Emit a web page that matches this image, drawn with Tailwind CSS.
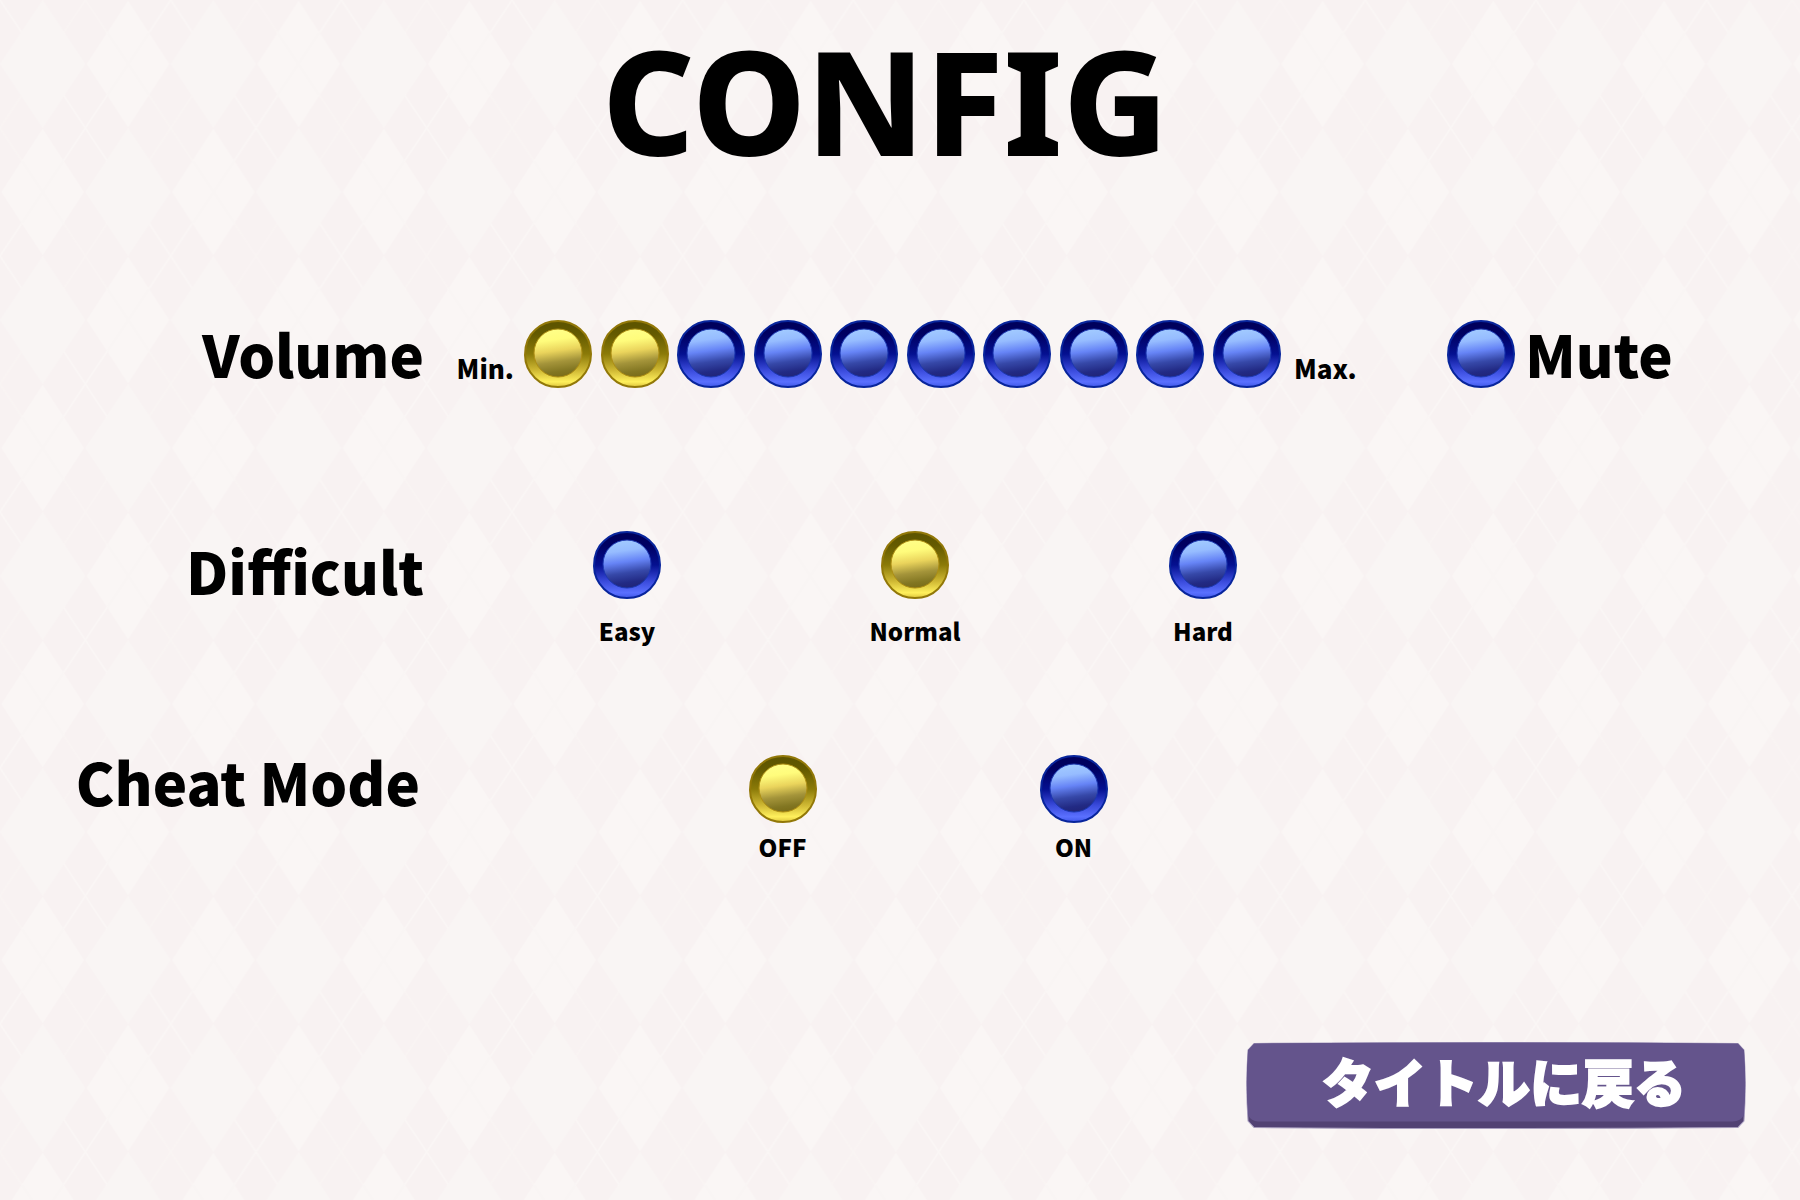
<!DOCTYPE html>
<html lang="ja">
<head>
<meta charset="utf-8">
<meta name="viewport" content="width=device-width, initial-scale=1">
<title>Config</title>
<script src="https://cdn.jsdelivr.net/npm/@tailwindcss/browser@4"></script>
</head>
<body class="relative isolate min-h-screen overflow-x-hidden bg-[#f8f2f2] font-['Noto_Sans_CJK_JP',sans-serif] font-black text-black">

<!-- Argyle backdrop -->
<svg class="absolute inset-0 -z-10 h-full w-full" aria-hidden="true">
  <defs>
    <pattern id="argyle" width="512" height="768" patternUnits="userSpaceOnUse" patternTransform="scale(.33333)">
      <path stroke="#faf6f5" stroke-width="5" fill="none" d="M0 0L512 768M512 0L0 768"/>
      <path stroke="#f9f4f3" stroke-width="5" fill="none" d="M256 0L512 384M256 0L0 384M0 384L256 768M512 384L256 768"/>
      <path fill="#f9f5f4" d="M128 0L256 192 128 384 0 192ZM384 384L512 576 384 768 256 576Z"/>
      <path fill="#faf6f5" d="M384 2L508 192 384 382 260 192ZM128 386L252 576 128 766 4 576Z"/>
      <path stroke="#f9f5f4" stroke-width="5" fill="none" d="M320 96L448 288M448 96L320 288M64 480L192 672M192 480L64 672"/>
    </pattern>
    <linearGradient id="blueRim" x1="0" y1="0" x2="0" y2="1">
      <stop offset=".06" stop-color="#00005c"/><stop offset=".2" stop-color="#000062"/><stop offset=".5" stop-color="#041090"/><stop offset=".75" stop-color="#3a4bdc"/><stop offset=".92" stop-color="#5a70ff"/><stop offset="1" stop-color="#4058e8"/>
    </linearGradient>
    <linearGradient id="blueFace" x1=".42" y1="0" x2=".56" y2="1">
      <stop offset="0" stop-color="#a2cbff"/><stop offset=".22" stop-color="#96bcff"/><stop offset=".45" stop-color="#6684f6"/><stop offset=".68" stop-color="#3648a8"/><stop offset=".88" stop-color="#222a84"/><stop offset="1" stop-color="#202478"/>
    </linearGradient>
    <linearGradient id="goldRim" x1="0" y1="0" x2="0" y2="1">
      <stop offset=".06" stop-color="#5e5500"/><stop offset=".2" stop-color="#645a00"/><stop offset=".5" stop-color="#8b7a08"/><stop offset=".75" stop-color="#d0b934"/><stop offset=".92" stop-color="#fff05c"/><stop offset="1" stop-color="#dcc43c"/>
    </linearGradient>
    <linearGradient id="goldFace" x1=".42" y1="0" x2=".56" y2="1">
      <stop offset="0" stop-color="#ffff88"/><stop offset=".22" stop-color="#fffc7c"/><stop offset=".45" stop-color="#ead45c"/><stop offset=".68" stop-color="#a4943a"/><stop offset=".88" stop-color="#827622"/><stop offset="1" stop-color="#7a6c18"/>
    </linearGradient>
    <symbol id="blue" viewBox="0 0 68 68">
      <path fill="url(#blueRim)" stroke="#08259c" stroke-width="2" d="M34 1C42 1 50 4 56 9C63 15 67 24 67 34C67 43 63 52 57 58C51 64 43 67 34 67C25 67 17 64 11 58C5 52 1 43 1 35C1 25 4 16 11 10C17 4 25 1 34 1Z"/>
      <circle cx="34" cy="33" r="24" fill="url(#blueFace)" stroke="#1c38b0"/>
    </symbol>
    <symbol id="gold" viewBox="0 0 68 68">
      <path fill="url(#goldRim)" stroke="#927808" stroke-width="2" d="M34 1C42 1 50 4 56 9C63 15 67 24 67 34C67 43 63 52 57 58C51 64 43 67 34 67C25 67 17 64 11 58C5 52 1 43 1 35C1 25 4 16 11 10C17 4 25 1 34 1Z"/>
      <circle cx="34" cy="33" r="24" fill="url(#goldFace)" stroke="#ae8e14"/>
    </symbol>
  </defs>
  <rect width="100%" height="100%" fill="url(#argyle)"/>
</svg>

<header class="pr-[30px]">
  <h1 class="text-center font-['Noto_Sans',sans-serif] text-[144px] leading-[200px] font-extrabold">CONFIG</h1>
</header>

<main class="pt-[120px]">
  <fieldset class="flex h-[211px] items-start text-[26px] leading-[36px]">
    <div class="w-[424px] shrink-0 text-right text-[58px] leading-[66px]" id="volume">Volume</div>
    <span class="w-[100px] shrink-0 pt-[30px] pr-[10px] text-right">Min.</span>
    <div class="flex w-[757px] justify-between" role="radiogroup" aria-labelledby="volume">
      <label class="relative size-[68px]"><input type="radio" name="volume" value="1" aria-label="Volume 1" class="absolute inset-0 size-full cursor-pointer appearance-none rounded-full"><svg class="size-full"><use href="#gold"/></svg></label>
      <label class="relative size-[68px]"><input type="radio" name="volume" value="2" aria-label="Volume 2" checked class="absolute inset-0 size-full cursor-pointer appearance-none rounded-full"><svg class="size-full"><use href="#gold"/></svg></label>
      <label class="relative size-[68px]"><input type="radio" name="volume" value="3" aria-label="Volume 3" class="absolute inset-0 size-full cursor-pointer appearance-none rounded-full"><svg class="size-full"><use href="#blue"/></svg></label>
      <label class="relative size-[68px]"><input type="radio" name="volume" value="4" aria-label="Volume 4" class="absolute inset-0 size-full cursor-pointer appearance-none rounded-full"><svg class="size-full"><use href="#blue"/></svg></label>
      <label class="relative size-[68px]"><input type="radio" name="volume" value="5" aria-label="Volume 5" class="absolute inset-0 size-full cursor-pointer appearance-none rounded-full"><svg class="size-full"><use href="#blue"/></svg></label>
      <label class="relative size-[68px]"><input type="radio" name="volume" value="6" aria-label="Volume 6" class="absolute inset-0 size-full cursor-pointer appearance-none rounded-full"><svg class="size-full"><use href="#blue"/></svg></label>
      <label class="relative size-[68px]"><input type="radio" name="volume" value="7" aria-label="Volume 7" class="absolute inset-0 size-full cursor-pointer appearance-none rounded-full"><svg class="size-full"><use href="#blue"/></svg></label>
      <label class="relative size-[68px]"><input type="radio" name="volume" value="8" aria-label="Volume 8" class="absolute inset-0 size-full cursor-pointer appearance-none rounded-full"><svg class="size-full"><use href="#blue"/></svg></label>
      <label class="relative size-[68px]"><input type="radio" name="volume" value="9" aria-label="Volume 9" class="absolute inset-0 size-full cursor-pointer appearance-none rounded-full"><svg class="size-full"><use href="#blue"/></svg></label>
      <label class="relative size-[68px]"><input type="radio" name="volume" value="10" aria-label="Volume 10" class="absolute inset-0 size-full cursor-pointer appearance-none rounded-full"><svg class="size-full"><use href="#blue"/></svg></label>
    </div>
    <span class="w-[166px] shrink-0 pt-[30px] pl-[13px]">Max.</span>
    <label class="flex cursor-pointer gap-[10px] text-[58px] leading-[66px]">
      <span class="relative size-[68px]"><input type="checkbox" name="mute" class="absolute inset-0 size-full cursor-pointer appearance-none rounded-full"><svg class="size-full"><use href="#blue"/></svg></span>
      Mute
    </label>
  </fieldset>

  <fieldset class="flex h-[217px] items-start text-[24px] leading-[36px]">
    <div class="w-[424px] shrink-0 pt-[6px] text-right text-[58px] leading-[66px]" id="difficulty">Difficult</div>
    <div class="ml-[59px] grid w-[864px] grid-cols-3" role="radiogroup" aria-labelledby="difficulty">
      <label class="flex cursor-pointer flex-col items-center gap-[14px]"><span class="relative size-[68px]"><input type="radio" name="difficulty" value="easy" class="absolute inset-0 size-full cursor-pointer appearance-none rounded-full"><svg class="size-full"><use href="#blue"/></svg></span>Easy</label>
      <label class="flex cursor-pointer flex-col items-center gap-[14px]"><span class="relative size-[68px]"><input type="radio" name="difficulty" value="normal" checked class="absolute inset-0 size-full cursor-pointer appearance-none rounded-full"><svg class="size-full"><use href="#gold"/></svg></span>Normal</label>
      <label class="flex cursor-pointer flex-col items-center gap-[14px]"><span class="relative size-[68px]"><input type="radio" name="difficulty" value="hard" class="absolute inset-0 size-full cursor-pointer appearance-none rounded-full"><svg class="size-full"><use href="#blue"/></svg></span>Hard</label>
    </div>
  </fieldset>

  <fieldset class="flex h-[294px] items-start text-[24px] leading-[36px]">
    <div class="w-[420px] shrink-0 text-right text-[58px] leading-[66px]" id="cheat">Cheat Mode</div>
    <div class="ml-[217px] grid w-[582px] grid-cols-2 pt-[7px]" role="radiogroup" aria-labelledby="cheat">
      <label class="flex cursor-pointer flex-col items-center gap-[6px]"><span class="relative size-[68px]"><input type="radio" name="cheat" value="off" checked class="absolute inset-0 size-full cursor-pointer appearance-none rounded-full"><svg class="size-full"><use href="#gold"/></svg></span>OFF</label>
      <label class="flex cursor-pointer flex-col items-center gap-[6px]"><span class="relative size-[68px]"><input type="radio" name="cheat" value="on" class="absolute inset-0 size-full cursor-pointer appearance-none rounded-full"><svg class="size-full"><use href="#blue"/></svg></span>ON</label>
    </div>
  </fieldset>
</main>

<footer class="flex justify-end pr-[54px]">
  <button type="button" class="relative isolate h-[87px] w-[500px] cursor-pointer pb-[10px] pl-4 text-[52px] leading-[76px] text-white [-webkit-text-stroke:2px_white]">
    <svg class="absolute inset-0 -z-10 size-full" viewBox="0 0 493 87" preserveAspectRatio="none" aria-hidden="true">
      <path fill="#524273" stroke="#a99fc0" d="M8 1.5Q246 -.5 485 1.5L491 8Q493.500 43 491 79L485 85.500Q246 87.500 8 85.500L2 79Q-.5 43 2 8Z"/>
      <path fill="#64548c" d="M8 1.500Q246 -.5 485 1.500L491 8Q493.500 40 491 73Q488 79 480 79.500H12Q5 79 2 73Q-.5 40 2 8Z"/>
    </svg>
    タイトルに戻る
  </button>
</footer>
</body>
</html>
